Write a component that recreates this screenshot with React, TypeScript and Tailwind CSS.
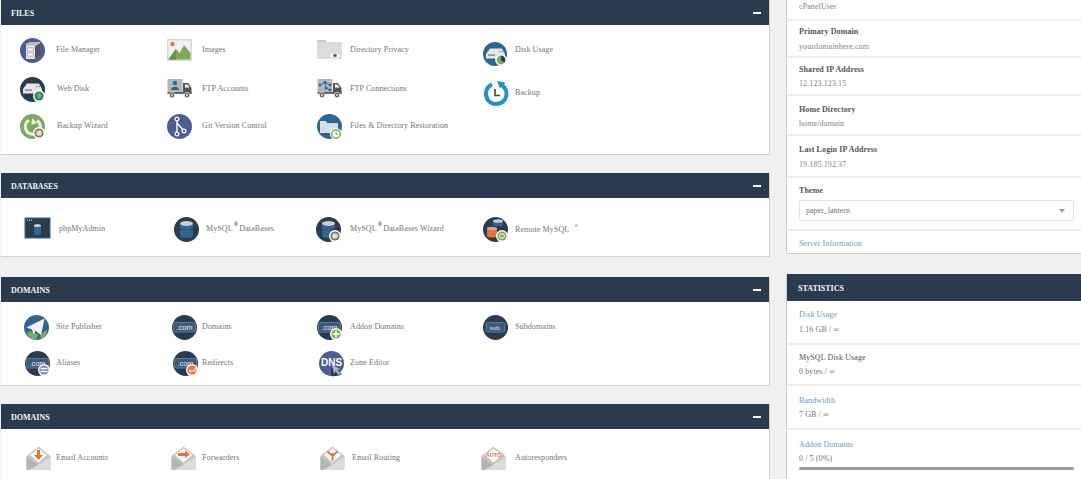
import type { ReactNode } from "react";

const navy = "#2a3b4e";
const blue = "#2f6690";
const purple = "#4f5b93";
const green = "#7cab5b";
const orange = "#e8703a";

function Svg({ children, className = "" }: { children: ReactNode; className?: string }) {
  return (
    <svg viewBox="0 0 25 25" className={`h-[25px] w-[25px] overflow-visible ${className}`} aria-hidden="true">
      {children}
    </svg>
  );
}

function Badge({ fill, children }: { fill: string; children?: ReactNode }) {
  return (
    <g>
      <circle cx="19" cy="19" r="6" fill="#fff" />
      <circle cx="19" cy="19" r="4.6" fill={fill} />
      {children}
    </g>
  );
}

const Drive = () => (
  <g>
    <path d="M3 12 L7 6.5 H19 L22 12 V16.5 H3Z" fill="#e6e6e6" />
    <rect x="5" y="12.5" width="7" height="1.2" fill="#777" />
    <circle cx="17" cy="9.5" r=".7" fill="#777" />
    <circle cx="19.5" cy="9.5" r=".7" fill="#777" />
  </g>
);

const DbStack = ({ bottom = "#2f6690", top = "#2f6690" }: { bottom?: string; top?: string }) => (
  <g>
    <path d="M6 13 H19 V19 C19 21.5 6 21.5 6 19Z" fill={bottom} />
    <path d="M6 7 H19 V11 C19 13.5 6 13.5 6 11Z" fill={top} />
    <ellipse cx="12.5" cy="6.5" rx="6.5" ry="2.4" fill="#c8cdd2" />
  </g>
);

const Com = ({ text = ".com", small = false }: { text?: string; small?: boolean }) => (
  <g>
    <rect x={small ? 3 : 1.5} y="7.5" width={small ? 19 : 22} height="9.5" rx="1.5" fill="#3c5a7a" stroke="#6d8fb0" strokeWidth=".7" />
    <text x="12.5" y="15" textAnchor="middle" fill="#e6ecf2" fontSize={small ? 6 : 7.5} fontFamily="Liberation Sans, sans-serif">
      {text}
    </text>
  </g>
);

const Truck = ({ children }: { children: ReactNode }) => (
  <g>
    <rect x="0.5" y="2" width="15" height="13" fill="#b5b8bb" />
    {children}
    <path d="M16 6 H21 L24.5 11 V17 H16Z" fill="#555" />
    <path d="M18 7.5 H20.5 L22.5 10.5 H18Z" fill="#fff" />
    <rect x="0.5" y="15" width="24" height="2" fill="#666" />
    <circle cx="5" cy="18" r="2.6" fill="#555" stroke="#fff" strokeWidth=".6" />
    <circle cx="5" cy="18" r=".9" fill="#fff" />
    <circle cx="20" cy="18" r="2.6" fill="#555" stroke="#fff" strokeWidth=".6" />
    <circle cx="20" cy="18" r=".9" fill="#fff" />
  </g>
);

const Mail = ({ children }: { children: ReactNode }) => (
  <g>
    <path d="M0.5 10 L12.5 0.5 L24.5 10 V24 H0.5Z" fill="#c4c4c4" />
    <path d="M4 9 L12.5 2.5 L21 9 L12.5 16.5Z" fill="#fff" />
    <path d="M0.5 11 L12.5 19 L0.5 24Z" fill="#b4b4b4" />
    <path d="M24.5 11 L4 24 H24.5Z" fill="#dcdcdc" />
    {children}
  </g>
);

const icons: Record<string, ReactNode> = {
  file: (
    <>
      <circle cx="12.5" cy="12.5" r="12.5" fill={purple} />
      <path d="M6 6 L11 4 H20 V18 L15 21 H6Z" fill="#e2e2e2" />
      <path d="M15 8 L20 5 V18 L15 21Z" fill="#555" />
      <path d="M6 6 L11 4 H20 L15 7.5 H6Z" fill="#bdbdbd" />
      <rect x="7.5" y="10" width="6" height="3" fill="#fff" stroke="#888" strokeWidth=".5" />
      <rect x="7.5" y="15" width="6" height="3" fill="#fff" stroke="#888" strokeWidth=".5" />
    </>
  ),
  images: (
    <>
      <rect x="0" y="1" width="25" height="22" fill="#d6d6d6" />
      <rect x="1.5" y="2.5" width="22" height="19" fill="#f1f1f1" />
      <circle cx="5.5" cy="6" r="2.2" fill={orange} />
      <path d="M1.5 21 L9 11 L12.5 15 L17 7 L23.5 15 V21.5 H1.5Z" fill="#7fa954" />
      <path d="M1.5 21.5 L9 11 L9 21.5Z" fill="#6a9344" />
    </>
  ),
  privacy: (
    <>
      <path d="M0 2.5 H9 V4 H25 V21 H0Z" fill="#dcdcdc" />
      <rect x="0" y="2.5" width="9" height="1" fill="#aaa" />
      <path d="M13 17.5 C15 14 21 14 23 17.5 C21 21 15 21 13 17.5Z" fill="#fff" />
      <circle cx="18" cy="17.5" r="2" fill="#6b8f4e" />
      <circle cx="18" cy="17.5" r=".8" fill="#333" />
    </>
  ),
  disk: (
    <>
      <circle cx="12" cy="12" r="12" fill={blue} />
      <Drive />
      <circle cx="18" cy="18" r="5.8" fill="#fff" />
      <circle cx="18" cy="18" r="4.4" fill={green} />
      <path d="M18 18 V13.6 A4.4 4.4 0 0 1 21.4 20.8Z" fill={navy} />
    </>
  ),
  webdisk: (
    <>
      <circle cx="12.5" cy="12.5" r="12.5" fill={navy} />
      <Drive />
      <Badge fill="#2f7d78">
        <path d="M16.5 17 L20 16 L22 19 L19 22 L17.5 20Z" fill={green} />
      </Badge>
    </>
  ),
  ftp: (
    <Truck>
      <circle cx="8" cy="6" r="2.2" fill={blue} />
      <path d="M4 13 C4 8.5 12 8.5 12 13Z" fill={blue} />
    </Truck>
  ),
  conn: (
    <Truck>
      <g stroke={blue} strokeWidth=".8">
        <path d="M3 8 L8 5.5 L13 8 M8 5.5 L9 11 L13 13" fill="none" />
      </g>
      <circle cx="3" cy="8" r="1.4" fill={blue} />
      <circle cx="8" cy="5.5" r="1.4" fill={blue} />
      <circle cx="13" cy="8" r="1.4" fill={blue} />
      <circle cx="9" cy="11" r="1.6" fill={blue} />
      <circle cx="13" cy="13" r="1.4" fill={blue} />
    </Truck>
  ),
  backup: (
    <>
      <path d="M9 3.4 A10.3 10.3 0 1 0 18 3.7" fill="none" stroke="#2392c9" strokeWidth="4" />
      <path d="M14 0 L22.5 1.5 L17 7.5Z" fill="#2392c9" />
      <path d="M12 8 V14.5 H17" fill="none" stroke="#444" strokeWidth="1.6" />
    </>
  ),
  wizard: (
    <>
      <circle cx="12.5" cy="12.5" r="12.5" fill={green} />
      <path d="M9 6.2 A7.5 7.5 0 1 0 17 6.5" fill="none" stroke="#fff" strokeWidth="3" opacity=".85" />
      <path d="M12 4 L17 9 L11.5 11Z" fill="#fff" opacity=".85" />
      <Badge fill="#8a7a6c">
        <circle cx="19" cy="19" r="2.8" fill="#ddd" />
      </Badge>
    </>
  ),
  git: (
    <>
      <circle cx="12.5" cy="12.5" r="12.5" fill={purple} />
      <path d="M10 5 V20 M10 9 L17 17" stroke="#fff" strokeWidth="1.4" fill="none" />
      <circle cx="10" cy="5" r="1.9" fill={purple} stroke="#fff" strokeWidth="1.2" />
      <circle cx="10" cy="20" r="1.9" fill={purple} stroke="#fff" strokeWidth="1.2" />
      <circle cx="17" cy="17" r="1.9" fill={purple} stroke="#fff" strokeWidth="1.2" />
    </>
  ),
  restore: (
    <>
      <circle cx="12.5" cy="12.5" r="12.5" fill={blue} />
      <path d="M3 7 H9 L10 9 H21 V19 H3Z" fill="#d9dde2" />
      <circle cx="19" cy="20" r="6" fill="#fff" />
      <circle cx="19" cy="20" r="4.3" fill="none" stroke={green} strokeWidth="1.5" />
      <path d="M19 17.5 V20.5 H21" fill="none" stroke={green} strokeWidth="1" />
    </>
  ),
  pma: (
    <>
      <rect x="0" y="1" width="25" height="20" fill={navy} />
      <rect x="0" y="1" width="25" height="20" fill="none" stroke="#2c6a8c" strokeWidth="1" />
      <circle cx="2.5" cy="3.2" r=".6" fill="#ddd" />
      <circle cx="4.5" cy="3.2" r=".6" fill="#ddd" />
      <circle cx="6.5" cy="3.2" r=".6" fill="#ddd" />
      <path d="M9 9 H16 V17 C16 18.5 9 18.5 9 17Z" fill="#2f6690" />
      <ellipse cx="12.5" cy="8.5" rx="3.5" ry="1.6" fill="#c8cdd2" />
    </>
  ),
  mysql: (
    <>
      <circle cx="12.5" cy="12.5" r="12.5" fill={navy} />
      <DbStack />
    </>
  ),
  mysqlw: (
    <>
      <circle cx="12.5" cy="12.5" r="12.5" fill={navy} />
      <DbStack />
      <Badge fill="#7d7468">
        <circle cx="19" cy="19" r="2.8" fill="#ddd" />
      </Badge>
    </>
  ),
  remote: (
    <>
      <circle cx="12.5" cy="12.5" r="12.5" fill={navy} />
      <path d="M10 3 H20 V9 H10Z" fill={blue} />
      <ellipse cx="15" cy="4" rx="5" ry="1.8" fill="#c8cdd2" />
      <path d="M4 12 H14 V19 C14 21 4 21 4 19Z" fill={orange} />
      <ellipse cx="9" cy="11.5" rx="5" ry="1.8" fill="#d6a68e" />
      <Badge fill={green}>
        <circle cx="19" cy="19" r="2.4" fill="none" stroke="#fff" strokeWidth="1" />
      </Badge>
    </>
  ),
  publisher: (
    <>
      <circle cx="12.5" cy="12.5" r="12.5" fill={blue} />
      <path d="M3 18 C7 14 11 18 14 20 L12 24.5 C8 25 4 22 3 18Z" fill={green} />
      <path d="M16 19 L23 15 C23 19 20 23 17 24Z" fill={green} />
      <path d="M2.5 12.5 L20.5 3.5 L17 20 L11 15.5 L10 20 L8 14.5Z" fill="#f2f2f2" />
    </>
  ),
  domains: (
    <>
      <circle cx="12.5" cy="12.5" r="12.5" fill={navy} />
      <Com />
    </>
  ),
  addon: (
    <>
      <circle cx="12.5" cy="12.5" r="12.5" fill={navy} />
      <Com />
      <Badge fill={green}>
        <path d="M19 15.5 V22.5 M15.5 19 H22.5" stroke="#fff" strokeWidth="1.5" />
      </Badge>
    </>
  ),
  sub: (
    <>
      <circle cx="12.5" cy="12.5" r="12.5" fill={navy} />
      <Com text="sub." small />
    </>
  ),
  aliases: (
    <>
      <circle cx="12.5" cy="12.5" r="12.5" fill={navy} />
      <Com />
      <Badge fill="#7b86ad">
        <path d="M15.5 17.5 H22.5 M15.5 20.5 H22.5" stroke="#fff" strokeWidth="1.4" />
      </Badge>
    </>
  ),
  redirects: (
    <>
      <circle cx="12.5" cy="12.5" r="12.5" fill={navy} />
      <Com />
      <Badge fill={orange}>
        <path d="M22 16.5 V20 H16.5 M18 18.5 L16 20 L18 21.5" stroke="#fff" strokeWidth="1" fill="none" />
      </Badge>
    </>
  ),
  dns: (
    <>
      <circle cx="12.5" cy="12.5" r="12.5" fill={purple} />
      <path d="M12 16 L23 23 C20 25 15 25.5 12 25Z" fill={navy} />
      <text x="12.5" y="14.5" textAnchor="middle" fill="#fff" fontSize="10" fontWeight="700" fontFamily="Liberation Sans, sans-serif">
        DNS
      </text>
      <path d="M13 14 L21 18 L18 19 L21.5 22.5 L19.5 24 L16.5 20.5 L15 23Z" fill="#a9b2d3" />
    </>
  ),
  email: (
    <Mail>
      <path d="M11 4 H14 V9 H17 L12.5 14 L8 9 H11Z" fill={orange} />
    </Mail>
  ),
  forward: (
    <Mail>
      <path d="M7 7 H14 V4.5 L19 8.5 L14 12 V10 H7Z" fill={orange} />
    </Mail>
  ),
  routing: (
    <Mail>
      <path d="M12.5 15 V7 M12.5 10 L7.5 5.5 M12.5 10 L17.5 5.5" stroke={orange} strokeWidth="1.8" fill="none" />
    </Mail>
  ),
  auto: (
    <Mail>
      <text x="12.5" y="10.5" textAnchor="middle" fill={orange} fontSize="5.5" fontWeight="700" fontFamily="Liberation Sans, sans-serif">
        AUTO
      </text>
    </Mail>
  ),
  dark: <circle cx="12.5" cy="12.5" r="12.5" fill="#555" />,
};

interface Item {
  label: ReactNode;
  icon: string;
  lead: string;
  iconClass?: string;
  boxClass?: string;
}

const Reg = () => <sup className="mx-[1px] align-[2px] text-[6px] font-bold leading-none text-[#222]">®</sup>;

const files: Item[] = [
  { label: "File Manager", icon: "file", lead: "w-[36px]" },
  { label: "Images", icon: "images", lead: "w-[35px]" },
  { label: "Directory Privacy", icon: "privacy", lead: "w-[33px]" },
  { label: "Disk Usage", icon: "disk", lead: "w-[32px]", iconClass: "mt-[8px]" },
  { label: "Web Disk", icon: "webdisk", lead: "w-[37px]" },
  { label: "FTP Accounts", icon: "ftp", lead: "w-[35px]" },
  { label: "FTP Connections", icon: "conn", lead: "w-[33px]" },
  { label: "Backup", icon: "backup", lead: "w-[32px]", boxClass: "mt-[4px]" },
  { label: "Backup Wizard", icon: "wizard", lead: "w-[37px]" },
  { label: "Git Version Control", icon: "git", lead: "w-[35px]" },
  { label: "Files & Directory Restoration", icon: "restore", lead: "w-[33px]" },
];

const databases: Item[] = [
  { label: "phpMyAdmin", icon: "pma", lead: "w-[39px]", iconClass: "ml-[5px]" },
  { label: <>MySQL<Reg />DataBases</>, icon: "mysql", lead: "w-[39px]", iconClass: "ml-[7px]" },
  { label: <>MySQL<Reg />DataBases Wizard</>, icon: "mysqlw", lead: "w-[33px]", iconClass: "-ml-[1px]" },
  { label: <>Remote MySQL <span className="ml-[3px] align-[2px] text-[#c98a7a]">*</span></>, icon: "remote", lead: "w-[32px]" },
];

const domains: Item[] = [
  { label: "Site Publisher", icon: "publisher", lead: "w-[36px]", iconClass: "ml-[4px]" },
  { label: "Domains", icon: "domains", lead: "w-[35px]", iconClass: "ml-[5px]" },
  { label: "Addon Domains", icon: "addon", lead: "w-[33px]" },
  { label: "Subdomains", icon: "sub", lead: "w-[32px]" },
  { label: "Aliases", icon: "aliases", lead: "w-[36px]", iconClass: "ml-[5px]" },
  { label: "Redirects", icon: "redirects", lead: "w-[35px]", iconClass: "ml-[6px]" },
  { label: "Zone Editor", icon: "dns", lead: "w-[33px]", iconClass: "ml-[2px]" },
];

const email: Item[] = [
  { label: "Email Accounts", icon: "email", lead: "w-[36px]", iconClass: "ml-[6px]" },
  { label: "Forwarders", icon: "forward", lead: "w-[35px]", iconClass: "ml-[4px]" },
  { label: "Email Routing", icon: "routing", lead: "w-[35px]", iconClass: "ml-[3px]" },
  { label: "Autoresponders", icon: "auto", lead: "w-[32px]", iconClass: "-ml-[2px]" },
  { label: "", icon: "dark", lead: "w-[36px]", iconClass: "ml-[5px]" },
  { label: "", icon: "dark", lead: "w-[35px]", iconClass: "ml-[5px]" },
  { label: "", icon: "dark", lead: "w-[33px]", iconClass: "ml-[2px]" },
  { label: "", icon: "dark", lead: "w-[32px]", iconClass: "ml-[0px]" },
];

function Feature({ item }: { item: Item }) {
  return (
    <div className={`flex h-6 items-center ${item.boxClass ?? ""}`}>
      <div className={`shrink-0 ${item.lead}`}>
        <Svg className={item.iconClass}>{icons[item.icon]}</Svg>
      </div>
      <span className="whitespace-nowrap text-[8px] tracking-[0.1px] text-[#666] opacity-90">{item.label}</span>
    </div>
  );
}

function Panel({ title, className, gridClass, items }: { title: string; className: string; gridClass: string; items: Item[] }) {
  return (
    <section className={`border-b border-r border-[#cfcfcf] bg-white ${className}`}>
      <header className="flex h-[25px] items-center justify-between bg-[#2a3b4e] pl-[10px] pr-[8px] text-[8px] font-bold text-white">
        <span className="pt-[2px] opacity-95">{title}</span>
        <span className="h-[2px] w-[8px] bg-white" />
      </header>
      <div className={`grid grid-cols-[147px_150px_166px_1fr] items-start pl-[19px] ${gridClass}`}>
        {items.map((item, i) => (
          <Feature key={i} item={item} />
        ))}
      </div>
    </section>
  );
}

function Info({ label, value, className }: { label: string; value: string; className: string }) {
  return (
    <div className={`flex flex-col border-b-2 border-[#eeeeee] pl-[12px] ${className}`}>
      <span className="text-[8px] font-bold leading-3 tracking-[0.1px] text-[#444] opacity-90">{label}</span>
      <span className="text-[8px] leading-3 tracking-[0.1px] text-[#777] opacity-90">{value}</span>
    </div>
  );
}

function Stat({ label, value, className, link = true }: { label: string; value: string; className: string; link?: boolean }) {
  return (
    <div className={`flex flex-col border-b-2 border-[#eeeeee] pl-[12px] ${className}`}>
      <span className={`text-[8px] leading-3 tracking-[0.1px] opacity-90 ${link ? "text-[#6090b8]" : "text-[#444]"}`}>{label}</span>
      <span className="text-[8px] leading-3 tracking-[0.1px] text-[#666] opacity-90">{value}</span>
    </div>
  );
}

export default function App() {
  return (
    <div className="flex h-[479px] w-[1081px] gap-[16px] overflow-hidden bg-[#f0f0f0] pl-[1px] font-['Liberation_Serif',serif]">
      <main className="w-[769px] shrink-0">
        <Panel title="FILES" className="h-[155px]" gridClass="grid-rows-[39px_37px_24px] pt-[13px]" items={files} />
        <Panel title="DATABASES" className="mt-[18px] h-[84px]" gridClass="pt-[19px]" items={databases} />
        <Panel title="DOMAINS" className="mt-[20px] h-[109px]" gridClass="grid-rows-[36px_24px] pt-[13px]" items={domains} />
        <Panel title="DOMAINS" className="mt-[18px] h-[120px]" gridClass="grid-rows-[44px_24px] pt-[17px]" items={email} />
      </main>
      <aside className="min-w-0 flex-1">
        <div className="border-b border-l border-[#cfcfcf] bg-white">
          <div className="h-[21px] border-b-2 border-[#eeeeee] pl-[12px] pt-[1px] text-[8px] leading-3 tracking-[0.1px] text-[#777]">
            <span className="opacity-90">cPanelUser</span>
          </div>
          <Info label="Primary Domain" value="yourdomainhere.com" className="h-[37px] gap-[3px] pt-[5px]" />
          <Info label="Shared IP Address" value="12.123.123.15" className="h-[38px] gap-[2px] pt-[6px]" />
          <Info label="Home Directory" value="home/domain" className="h-[40px] gap-[2px] pt-[8px]" />
          <Info label="Last Login IP Address" value="19.185.192.37" className="h-[42px] gap-[3px] pt-[8px]" />
          <div className="h-[53px] border-b-2 border-[#eeeeee] pl-[12px] pr-[7px] pt-[7px]">
            <div className="text-[8px] font-bold leading-3 tracking-[0.1px] text-[#444] opacity-90">Theme</div>
            <div className="mt-[3px] flex h-[21px] items-center justify-between rounded-[2px] border border-[#e2e2e2] pl-[6px] pr-[8px] text-[8px] text-[#666]">
              <span className="opacity-90">paper_lantern</span>
              <span className="h-0 w-0 border-x-[3px] border-t-[4px] border-x-transparent border-t-[#999]" />
            </div>
          </div>
          <div className="flex h-[22px] items-center pl-[12px] pt-[3px] text-[8px] tracking-[0.1px] text-[#6090b8]">
            <span className="opacity-90">Server Information</span>
          </div>
        </div>
        <div className="mt-[20px] h-[300px] border-l border-[#cfcfcf] bg-white">
          <header className="flex h-[27px] items-center bg-[#2a3b4e] pl-[11px] pt-[3px] text-[8px] font-bold text-white">
            <span className="opacity-95">STATISTICS</span>
          </header>
          <Stat label="Disk Usage" value="1.16 GB / ∞" className="h-[44px] gap-[3px] pt-[8px]" />
          <Stat label="MySQL Disk Usage" value="0 bytes / ∞" link={false} className="h-[41px] gap-[2px] pt-[7px]" />
          <Stat label="Bandwidth" value="7 GB / ∞" className="h-[44px] gap-[2px] pt-[9px]" />
          <div className="pl-[12px] pr-[7px] pt-[9px]">
            <div className="text-[8px] leading-3 tracking-[0.1px] text-[#6090b8] opacity-90">Addon Domains</div>
            <div className="mt-[2px] text-[8px] leading-3 tracking-[0.1px] text-[#666] opacity-90">0 / 5 (0%)</div>
            <div className="mt-[2px] h-[3px] rounded-full bg-[#999]" />
          </div>
        </div>
      </aside>
    </div>
  );
}
